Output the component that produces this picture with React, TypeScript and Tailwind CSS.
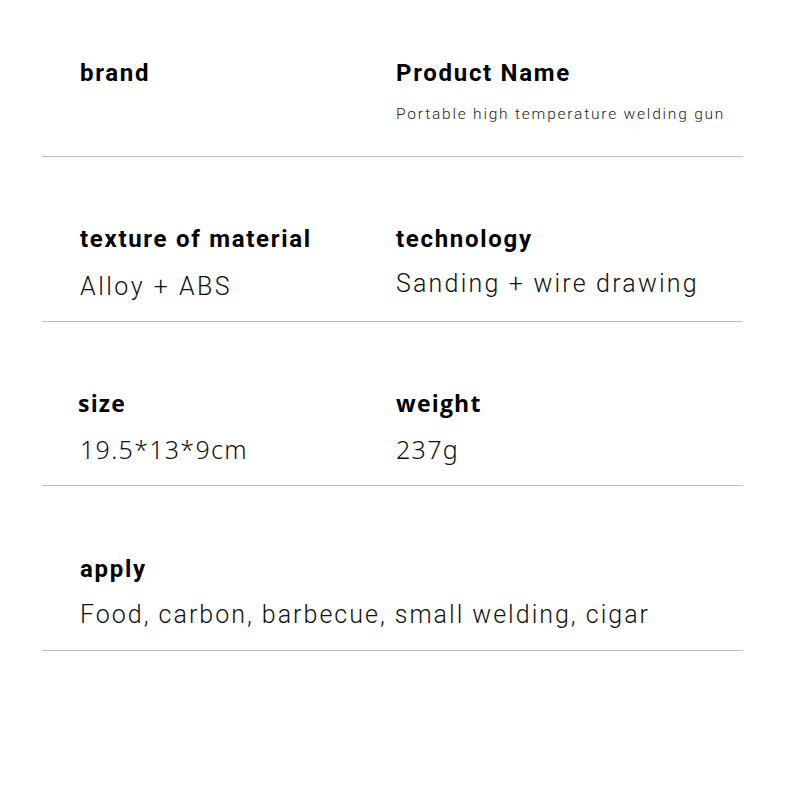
const label = 'text-[24px] font-bold leading-none tracking-[1.7px] text-black';
const value = 'text-[25px] font-light leading-none tracking-[2.2px] text-[#111]';
const altLabel = 'text-[23px] font-bold leading-none tracking-[1.2px] text-black';
const altValue = 'text-[25px] font-light leading-none tracking-[1.3px] text-[#111]';

function Row({
  left,
  right,
  className,
}: {
  left: React.ReactNode;
  right?: React.ReactNode;
  className: string;
}) {
  return (
    <div className={`grid grid-cols-[316px_1fr] border-b border-[#bdbdbd] pl-[38px] ${className}`}>
      <div>{left}</div>
      <div>{right}</div>
    </div>
  );
}

export default function App() {
  return (
    <main
      className="min-h-[791px] w-[790px] bg-white pt-[61px]"
      style={{ fontFamily: 'Roboto, "Liberation Sans", sans-serif' }}
    >
      <div className="ml-[42px] w-[701px]">
        <Row
          className="h-[96px]"
          left={<h2 className={label}>brand</h2>}
          right={
            <>
              <h2 className={label}>Product Name</h2>
              <p className="mt-[22px] text-[15.5px] font-light leading-none tracking-[1.8px] text-[#222]">
                Portable high temperature welding gun
              </p>
            </>
          }
        />
        <Row
          className="h-[165px] pt-[70px]"
          left={
            <>
              <h2 className={label}>texture of material</h2>
              <p className={`${value} mt-[23px] tracking-[2.5px]`}>Alloy + ABS</p>
            </>
          }
          right={
            <>
              <h2 className={label}>technology</h2>
              <p className={`${value} mt-[20px]`}>Sanding + wire drawing</p>
            </>
          }
        />
        <Row
          className="h-[164px] pt-[70px]"
          left={
            <>
              <h2 className={`${altLabel} -ml-[2px]`} style={{ fontFamily: '"Open Sans", sans-serif' }}>
                size
              </h2>
              <p className={`${altValue} mt-[22px]`} style={{ fontFamily: '"Noto Sans", sans-serif' }}>
                19.5*13*9cm
              </p>
            </>
          }
          right={
            <>
              <h2 className={altLabel} style={{ fontFamily: '"Open Sans", sans-serif' }}>
                weight
              </h2>
              <p className={`${altValue} mt-[22px]`} style={{ fontFamily: '"Noto Sans", sans-serif' }}>
                237g
              </p>
            </>
          }
        />
        <Row
          className="h-[165px] pt-[71px]"
          left={
            <div className="w-[680px]">
              <h2 className={label}>apply</h2>
              <p className="mt-[21px] text-[25px] font-light leading-none tracking-[2px] text-[#111]">
                Food, carbon, barbecue, small welding, cigar
              </p>
            </div>
          }
        />
      </div>
    </main>
  );
}
